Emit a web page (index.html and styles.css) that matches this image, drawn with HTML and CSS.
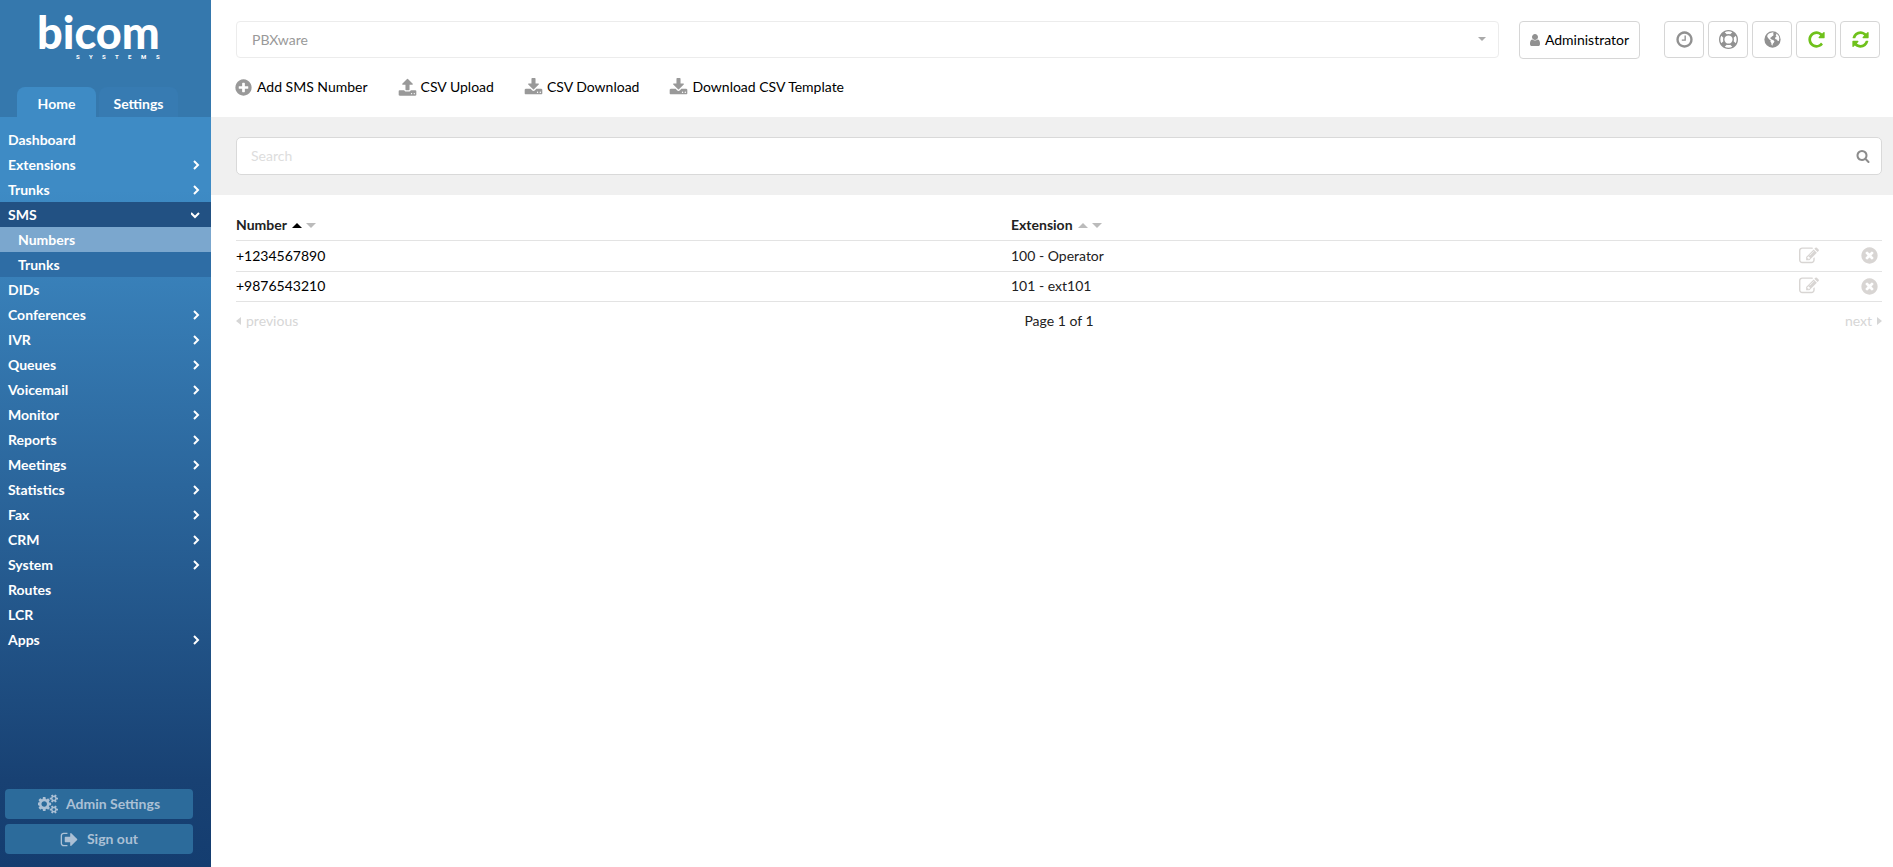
FILE: index.html
```
<!DOCTYPE html>
<html lang="en">
<head>
<meta charset="utf-8">
<title>PBXware - SMS Numbers</title>
<link rel="stylesheet" href="styles.css">
</head>
<body>
<svg class="sprite" aria-hidden="true">
  <symbol id="clock" viewBox="0 0 1792 1792"><path d="M1024 544v448q0 14-9 23t-23 9h-320q-14 0-23-9t-9-23v-64q0-14 9-23t23-9h224v-352q0-14 9-23t23-9h64q14 0 23 9t9 23zm416 352q0-148-73-273t-198-198-273-73-273 73-198 198-73 273 73 273 198 198 273 73 273-73 198-198 73-273zm224 0q0 209-103 385.500t-279.500 279.500-385.500 103-385.500-103-279.500-279.500-103-385.500 103-385.500 279.500-279.500 385.500-103 385.500 103 279.500 279.500 103 385.500z"/></symbol>
  <symbol id="plus" viewBox="0 0 1792 1792"><path d="M1344 960v-128q0-26-19-45t-45-19h-256v-256q0-26-19-45t-45-19h-128q-26 0-45 19t-19 45v256h-256q-26 0-45 19t-19 45v128q0 26 19 45t45 19h256v256q0 26 19 45t45 19h128q26 0 45-19t19-45v-256h256q26 0 45-19t19-45zm320-64q0 209-103 385.500t-279.500 279.500-385.500 103-385.500-103-279.500-279.500-103-385.500 103-385.500 279.500-279.500 385.500-103 385.500 103 279.500 279.500 103 385.500z"/></symbol>
  <symbol id="remove" viewBox="0 0 1792 1792"><path d="M1277 1122q0-26-19-45l-181-181 181-181q19-19 19-45 0-27-19-46l-90-90q-19-19-46-19-26 0-45 19l-181 181-181-181q-19-19-45-19-27 0-46 19l-90 90q-19 19-19 46 0 26 19 45l181 181-181 181q-19 19-19 45 0 27 19 46l90 90q19 19 46 19 26 0 45-19l181-181 181 181q19 19 45 19 27 0 46-19l90-90q19-19 19-46zm387-226q0 209-103 385.500t-279.500 279.500-385.500 103-385.500-103-279.500-279.500-103-385.500 103-385.500 279.500-279.500 385.500-103 385.500 103 279.500 279.500 103 385.500z"/></symbol>
  <symbol id="upload" viewBox="0 0 1792 1792"><path d="M1344 1472q0-26-19-45t-45-19-45 19-19 45 19 45 45 19 45-19 19-45zm256 0q0-26-19-45t-45-19-45 19-19 45 19 45 45 19 45-19 19-45zm128-224v320q0 40-28 68t-68 28h-1472q-40 0-68-28t-28-68v-320q0-40 28-68t68-28h427q21 56 70.500 92t110.500 36h256q61 0 110.500-36t70.500-92h427q40 0 68 28t28 68zm-325-648q-17 40-59 40h-256v448q0 26-19 45t-45 19h-256q-26 0-45-19t-19-45v-448h-256q-42 0-59-40-17-39 14-69l448-448q18-19 45-19t45 19l448 448q31 30 14 69z"/></symbol>
  <symbol id="download" viewBox="0 0 1792 1792"><path d="M1344 1344q0-26-19-45t-45-19-45 19-19 45 19 45 45 19 45-19 19-45zm256 0q0-26-19-45t-45-19-45 19-19 45 19 45 45 19 45-19 19-45zm128-224v320q0 40-28 68t-68 28h-1472q-40 0-68-28t-28-68v-320q0-40 28-68t68-28h465l135 136q58 56 136 56t136-56l136-136h464q40 0 68 28t28 68zm-325-569q17 41-14 70l-448 448q-18 19-45 19t-45-19l-448-448q-31-29-14-70 17-39 59-39h256v-448q0-26 19-45t45-19h256q26 0 45 19t19 45v448h256q42 0 59 39z"/></symbol>
  <symbol id="user" viewBox="0 0 1792 1792"><path d="M1536 1399q0 109-62.500 187t-150.500 78h-854q-88 0-150.500-78t-62.500-187q0-85 8.500-160.500t31.500-152 58.500-131 94-89 134.500-34.500q131 128 313 128t313-128q76 0 134.500 34.500t94 89 58.500 131 31.500 152 8.500 160.500zm-256-887q0 159-112.500 271.500t-271.500 112.500-271.500-112.500-112.500-271.500 112.500-271.500 271.500-112.500 271.500 112.500 112.500 271.500z"/></symbol>
  <symbol id="ring" viewBox="0 0 1792 1792"><path d="M896 0q182 0 348 71t286 191 191 286 71 348-71 348-191 286-286 191-348 71-348-71-286-191-191-286-71-348 71-348 191-286 286-191 348-71zm0 128q-190 0-361 90l194 194q82-28 167-28t167 28l194-194q-171-90-361-90zm-678 1129l194-194q-28-82-28-167t28-167l-194-194q-90 171-90 361t90 361zm678 407q190 0 361-90l-194-194q-82 28-167 28t-167-28l-194 194q171 90 361 90zm0-384q159 0 271.500-112.500t112.500-271.500-112.500-271.500-271.500-112.500-271.500 112.500-112.500 271.500 112.500 271.500 271.500 112.500zm484-217l194 194q90-171 90-361t-90-361l-194 194q28 82 28 167t-28 167z"/></symbol>
  <symbol id="globe" viewBox="0 0 1792 1792"><path fill-rule="evenodd" d="M896 128a768 768 0 1 1 0 1536a768 768 0 1 1 0-1536zM420 460L560 330L760 250L950 220L1010 290L930 370L1010 430L960 540L860 600L780 690L690 740L720 850L830 890L990 960L1080 1060L1030 1190L930 1290L880 1480L800 1400L790 1220L700 1110L720 960L600 890L500 780L400 640zM1180 300L1380 420L1500 600L1540 800L1500 1010L1400 1060L1330 920L1190 880L1130 770L1190 660L1290 600L1190 520L1260 430z"/></symbol>
  <symbol id="redo" viewBox="0 0 1792 1792"><path d="M1664 256v448q0 26-19 45t-45 19h-448q-42 0-59-40-17-39 14-69l138-138q-148-137-349-137-104 0-198.500 40.500t-163.500 109.500-109.500 163.500-40.500 198.500 40.500 198.500 109.500 163.500 163.500 109.500 198.500 40.500q119 0 225-52t179-147q7-10 23-12 15 0 25 9l137 138q9 8 9.500 20.500t-7.500 22.500q-109 132-264 204.500t-327 72.500q-156 0-298-61t-245-164-164-245-61-298 61-298 164-245 245-164 298-61q147 0 284.500 55.500t244.500 156.500l130-129q29-31 70-14 39 17 39 59z"/></symbol>
  <symbol id="refresh" viewBox="0 0 1792 1792"><path d="M1639 1056q0 5-1 7-64 268-268 434.500t-478 166.500q-146 0-282.500-55t-243.500-157l-129 129q-19 19-45 19t-45-19-19-45v-448q0-26 19-45t45-19h448q26 0 45 19t19 45-19 45l-137 137q71 66 161 102t187 36q134 0 250-65t186-179q11-17 53-117 8-23 30-23h192q13 0 22.500 9.500t9.500 22.500zm25-800v448q0 26-19 45t-45 19h-448q-26 0-45-19t-19-45 19-45l138-138q-148-137-349-137-134 0-250 65t-186 179q-11 17-53 117-8 23-30 23h-199q-13 0-22.500-9.500t-9.500-22.500v-7q65-268 270-434.500t480-166.500q146 0 284 55.500t245 156.500l130-129q19-19 45-19t45 19 19 45z"/></symbol>
  <symbol id="search" viewBox="0 0 1792 1792"><path d="M1216 832q0-185-131.500-316.500t-316.500-131.500-316.500 131.500-131.500 316.500 131.500 316.500 316.500 131.500 316.500-131.500 131.500-316.500zm512 832q0 52-38 90t-90 38q-54 0-90-38l-343-342q-179 124-399 124-143 0-273.500-55.500t-225-150-150-225-55.500-273.500 55.500-273.500 150-225 225-150 273.500-55.500 273.500 55.500 225 150 150 225 55.500 273.500q0 220-124 399l343 343q37 37 37 90z"/></symbol>
  <symbol id="edit" viewBox="0 0 1792 1792"><path d="M888 1184l116-116-152-152-116 116v56h96v96h56zm440-720q-16-16-33 1l-350 350q-17 17-1 33t33-1l350-350q17-17 1-33zm80 594v190q0 119-84.500 203.500t-203.500 84.500h-832q-119 0-203.500-84.500t-84.500-203.500v-832q0-119 84.500-203.500t203.500-84.500h832q63 0 117 25 15 7 18 23 3 17-9 29l-49 49q-14 14-32 8-23-6-45-6h-832q-66 0-113 47t-47 113v832q0 66 47 113t113 47h832q66 0 113-47t47-113v-126q0-13 9-22l64-64q15-15 35-7t20 29zm-96-738l288 288-672 672h-288v-288zm444 132l-92 92-288-288 92-92q28-28 68-28t68 28l152 152q28 28 28 68t-28 68z"/></symbol>
  <symbol id="exit" viewBox="0 0 1792 1792"><path d="M704 1440q0 4 1 20t.5 26.500-3 23.500-10 19.500-20.500 6.500h-320q-119 0-203.500-84.500t-84.500-203.500v-704q0-119 84.500-203.500t203.500-84.500h320q13 0 22.500 9.500t9.500 22.500q0 4 1 20t.5 26.500-3 23.500-10 19.500-20.500 6.500h-320q-66 0-113 47t-47 113v704q0 66 47 113t113 47h312l11.500 1 11.500 3 8 5.500 7 9 2 13.500zm928-544q0 26-19 45l-544 544q-19 19-45 19t-45-19-19-45v-288h-448q-26 0-45-19t-19-45v-384q0-26 19-45t45-19h448v-288q0-26 19-45t45-19 45 19l544 544q19 19 19 45z"/></symbol>
  <symbol id="cogs" viewBox="0 0 1856 1792"><path d="M832 896q0-106-75-181t-181-75-181 75-75 181 75 181 181 75 181-75 75-181zm768 512q0-52-38-90t-90-38-90 38-38 90q0 53 37.500 90.500t90.500 37.500 90.500-37.500 37.500-90.500zm0-1024q0-52-38-90t-90-38-90 38-38 90q0 53 37.500 90.500t90.500 37.500 90.500-37.500 37.500-90.500zm-384 421v185q0 10-7 19.500t-16 10.500l-155 24q-11 35-32 76 34 48 90 115 7 11 7 20 0 12-7 19-23 30-82.500 89.500t-78.500 59.500q-11 0-21-7l-115-90q-37 19-77 31-11 108-23 155-7 24-30 24h-186q-11 0-20-7.500t-10-17.500l-23-153q-34-10-75-31l-118 89q-7 7-20 7-11 0-21-8-144-133-144-160 0-9 7-19 10-14 41-53t47-61q-23-44-35-82l-152-24q-10-1-17-9.500t-7-19.500v-185q0-10 7-19.500t16-10.500l155-24q11-35 32-76-34-48-90-115-7-11-7-20 0-12 7-20 22-30 82-89t79-59q11 0 21 7l115 90q34-18 77-32 11-108 23-154 7-24 30-24h186q11 0 20 7.500t10 17.500l23 153q34 10 75 31l118-89q8-7 20-7 11 0 21 8 144 133 144 160 0 8-7 19-12 16-42 54t-45 60q23 48 34 82l152 23q10 2 17 10.500t7 19.500zm640 533v140q0 16-149 31-12 27-30 52 51 113 51 138 0 4-4 7-122 71-124 71-8 0-46-47t-52-68q-20 2-30 2t-30-2q-14 21-52 68t-46 47q-2 0-124-71-4-3-4-7 0-25 51-138-18-25-30-52-149-15-149-31v-140q0-16 149-31 13-29 30-52-51-113-51-138 0-4 4-7 4-2 35-20t59-34 30-16q8 0 46 46.500t52 67.500q20-2 30-2t30 2q51-71 92-112l6-2q4 0 124 70 4 3 4 7 0 25-51 138 17 23 30 52 149 15 149 31zm0-1024v140q0 16-149 31-12 27-30 52 51 113 51 138 0 4-4 7-122 71-124 71-8 0-46-47t-52-68q-20 2-30 2t-30-2q-14 21-52 68t-46 47q-2 0-124-71-4-3-4-7 0-25 51-138-18-25-30-52-149-15-149-31v-140q0-16 149-31 13-29 30-52-51-113-51-138 0-4 4-7 4-2 35-20t59-34 30-16q8 0 46 46.500t52 67.500q20-2 30-2t30 2q51-71 92-112l6-2q4 0 124 70 4 3 4 7 0 25-51 138 17 23 30 52 149 15 149 31z"/></symbol>
  <symbol id="right" viewBox="0 0 10 10"><path class="line" d="M3 1l4 4-4 4"/></symbol>
  <symbol id="down" viewBox="0 0 10 10"><path class="line" d="M0 3l4 4 4-4"/></symbol>
  <symbol id="tri-up" viewBox="0 0 10 5"><path d="M0 5l5-5 5 5z"/></symbol>
  <symbol id="tri-down" viewBox="0 0 10 5"><path d="M0 0l5 5 5-5z"/></symbol>
  <symbol id="tri-left" viewBox="0 0 5 8"><path d="M5 0l-5 4 5 4z"/></symbol>
  <symbol id="tri-right" viewBox="0 0 5 8"><path d="M0 0l5 4-5 4z"/></symbol>
</svg>
<div class="app">
  <aside class="sidebar">
    <header class="brand">
      <svg class="logo" viewBox="0 0 122 46" role="img" aria-label="bicom systems">
        <text class="logo-name" x="-3" y="32">bicom</text>
        <text class="logo-tag" x="36 49 62 75 88 101 116" y="42">SYSTEMS</text>
      </svg>
      <nav class="tabs"><a class="tab active" href="#">Home</a><a class="tab" href="#">Settings</a></nav>
    </header>
    <nav class="menu">
      <a href="#">Dashboard</a>
      <a href="#">Extensions<svg class="chev"><use href="#right"/></svg></a>
      <a href="#">Trunks<svg class="chev"><use href="#right"/></svg></a>
      <a class="open" href="#">SMS<svg class="chev"><use href="#down"/></svg></a>
      <a class="sub current" href="#">Numbers</a>
      <a class="sub" href="#">Trunks</a>
      <a href="#">DIDs</a>
      <a href="#">Conferences<svg class="chev"><use href="#right"/></svg></a>
      <a href="#">IVR<svg class="chev"><use href="#right"/></svg></a>
      <a href="#">Queues<svg class="chev"><use href="#right"/></svg></a>
      <a href="#">Voicemail<svg class="chev"><use href="#right"/></svg></a>
      <a href="#">Monitor<svg class="chev"><use href="#right"/></svg></a>
      <a href="#">Reports<svg class="chev"><use href="#right"/></svg></a>
      <a href="#">Meetings<svg class="chev"><use href="#right"/></svg></a>
      <a href="#">Statistics<svg class="chev"><use href="#right"/></svg></a>
      <a href="#">Fax<svg class="chev"><use href="#right"/></svg></a>
      <a href="#">CRM<svg class="chev"><use href="#right"/></svg></a>
      <a href="#">System<svg class="chev"><use href="#right"/></svg></a>
      <a href="#">Routes</a>
      <a href="#">LCR</a>
      <a href="#">Apps<svg class="chev"><use href="#right"/></svg></a>
    </nav>
    <footer class="side-actions">
      <button type="button"><svg class="i20"><use href="#cogs"/></svg>Admin Settings</button>
      <button type="button"><svg class="i19"><use href="#exit"/></svg>Sign out</button>
    </footer>
  </aside>
  <main class="main">
    <div class="topbar">
      <div class="picker">
        <select aria-label="Server"><option>PBXware</option></select>
        <svg class="picker-arrow"><use href="#tri-down"/></svg>
      </div>
      <button class="account" type="button"><svg class="i14"><use href="#user"/></svg>Administrator</button>
      <div class="tools">
        <button type="button" aria-label="History"><svg class="i19"><use href="#clock"/></svg></button>
        <button type="button" aria-label="Help"><svg class="i19"><use href="#ring"/></svg></button>
        <button type="button" aria-label="Language"><svg class="i19"><use href="#globe"/></svg></button>
        <button class="go" type="button" aria-label="Reload"><svg class="i19"><use href="#redo"/></svg></button>
        <button class="go" type="button" aria-label="Restart"><svg class="i19"><use href="#refresh"/></svg></button>
      </div>
    </div>
    <nav class="actions">
      <a href="#"><svg class="i19"><use href="#plus"/></svg>Add SMS Number</a>
      <a href="#"><svg class="i19"><use href="#upload"/></svg>CSV Upload</a>
      <a href="#"><svg class="i19"><use href="#download"/></svg>CSV Download</a>
      <a href="#"><svg class="i19"><use href="#download"/></svg>Download CSV Template</a>
    </nav>
    <form class="searchbar">
      <div class="searchbox">
        <input type="text" placeholder="Search" aria-label="Search">
        <button type="button" aria-label="Run search"><svg class="i14"><use href="#search"/></svg></button>
      </div>
    </form>
    <section class="list">
      <table>
        <thead>
          <tr>
            <th class="c-num">Number <svg class="sort on"><use href="#tri-up"/></svg><svg class="sort"><use href="#tri-down"/></svg></th>
            <th>Extension <svg class="sort"><use href="#tri-up"/></svg><svg class="sort"><use href="#tri-down"/></svg></th>
            <th class="c-act"></th>
            <th class="c-act"></th>
          </tr>
        </thead>
        <tbody>
          <tr><td class="num">+1234567890</td><td>100 - Operator</td><td class="act"><button type="button" aria-label="Edit"><svg class="i20"><use href="#edit"/></svg></button></td><td class="act"><button type="button" aria-label="Delete"><svg class="i19"><use href="#remove"/></svg></button></td></tr>
          <tr><td class="num">+9876543210</td><td>101 - ext101</td><td class="act"><button type="button" aria-label="Edit"><svg class="i20"><use href="#edit"/></svg></button></td><td class="act"><button type="button" aria-label="Delete"><svg class="i19"><use href="#remove"/></svg></button></td></tr>
        </tbody>
      </table>
      <nav class="pager">
        <a href="#"><svg class="page-arrow"><use href="#tri-left"/></svg>previous</a>
        <span>Page 1 of 1</span>
        <a class="next" href="#">next<svg class="page-arrow"><use href="#tri-right"/></svg></a>
      </nav>
    </section>
  </main>
</div>
</body>
</html>
```
FILE: styles.css
```
* { box-sizing: border-box; }
body { margin: 0; font: 14px/20px Lato, "Open Sans", sans-serif; color: #222; background: #fff; }
a { color: inherit; text-decoration: none; }
button, input, select { font: inherit; color: inherit; }
button { cursor: pointer; }
svg { fill: currentColor; flex: none; }
.sprite { display: none; }
.line { fill: none; stroke: currentColor; stroke-width: 2; }
.i14 { width: 14px; height: 14px; }
.i19 { width: 19px; height: 19px; }
.i20 { width: 20px; height: 20px; }

.app { display: flex; min-height: 100vh; }

.sidebar {
  width: 211px; flex: none; display: flex; flex-direction: column;
  color: #fff; font-weight: 700;
  background: linear-gradient(#3e8bc5 0, #3e8bc5 190px, #184173 780px, #143d70 100%);
}
.brand { background: #3578ad; height: 117px; display: flex; flex-direction: column; justify-content: space-between; padding-top: 17px; }
.logo { width: 122px; height: 46px; margin-left: 40px; overflow: visible; fill: #fff; }
.logo-name { font-size: 45px; font-weight: 900; }
.logo-tag { font: 700 6px Roboto, sans-serif; }
.tabs { display: flex; gap: 3px; padding-left: 17px; }
.tab { width: 79px; height: 30px; padding-top: 7px; text-align: center; border-radius: 8px 8px 0 0; background: #377bb2; }
.tab.active { background: #3e8bc5; }

.menu { padding-top: 10px; }
.menu a { display: flex; justify-content: space-between; align-items: center; height: 25px; padding: 0 10px 0 8px; }
.menu .open { background: #225183; }
.menu .sub { padding-left: 18px; background: #2e6da5; }
.menu .current { background: #7ba7ce; }
.chev { width: 10px; height: 10px; overflow: visible; }

.side-actions { margin-top: auto; padding: 0 18px 13px 5px; display: grid; gap: 5px; }
.side-actions button {
  display: flex; align-items: center; justify-content: center; gap: 8px; height: 30px;
  border: 0; border-radius: 4px; background: #2c6b9b; color: #abc0d5; font-weight: 700;
}

.main { flex: 1; min-width: 0; }
.topbar { display: flex; align-items: flex-start; padding: 21px 13px 0 25px; }
.picker { flex: 1; position: relative; }
.picker select { display: block; width: 100%; height: 37px; padding: 0 15px; border: 1px solid #ececec; border-radius: 4px; background: #fff; color: #999; appearance: none; }
.picker-arrow { position: absolute; right: 13px; top: 16px; width: 8px; height: 4px; color: #aaa; }
.account, .tools button { display: flex; align-items: center; justify-content: center; border: 1px solid #d6d6d6; border-radius: 4px; background: #fff; }
.account { width: 121px; height: 38px; margin: 0 24px 0 20px; padding: 0 2px 0 0; gap: 3px; color: #000; }
.account svg { color: #919191; }
.tools { display: flex; gap: 4px; }
.tools button { width: 40px; height: 37px; padding: 0; color: #919191; }
.tools .go { color: #6fc11b; }

.actions { display: flex; gap: 30px; height: 58px; padding: 18px 23px 0; color: #000; }
.actions a { display: flex; gap: 4px; height: 20px; align-items: center; }
.actions svg { color: #999; }

.searchbar { background: #f0f0f0; padding: 20px 11px 20px 25px; }
.searchbox { display: flex; height: 38px; background: #fff; border: 1px solid #d9d9d9; border-radius: 5px; }
.searchbox input { flex: 1; min-width: 0; border: 0; background: none; padding: 0 14px; outline: 0; }
.searchbox input::placeholder { color: #ddd; opacity: 1; }
.searchbox button { display: flex; align-items: center; border: 0; background: none; padding: 0 11px; color: #8c8c8c; }

.list { padding: 15px 11px 0 25px; }
table { width: 100%; border-collapse: collapse; table-layout: fixed; }
th, td { height: 31px; padding: 0; text-align: left; border-bottom: 1px solid #e3e3e3; }
th { height: 30px; }
tr:last-child td { height: 30px; }
.c-num { width: 775px; }
.c-act { width: 60px; }
.num { color: #000; }
.sort { width: 10px; height: 5px; margin: 0 2px 2px 2px; color: #bbb; }
.sort.on { color: #000; }
.act button { display: flex; margin-left: auto; border: 0; background: none; padding: 0 3px 0 0; color: #d8d5d3; }

.pager { display: grid; grid-template-columns: 1fr auto 1fr; padding-top: 9px; }
.pager a { display: flex; align-items: center; gap: 5px; color: #d6d6d6; }
.pager .next { justify-content: flex-end; }
.page-arrow { width: 5px; height: 8px; }
```
